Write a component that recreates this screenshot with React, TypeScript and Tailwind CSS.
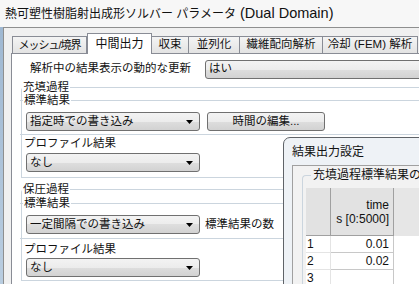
import React from 'react';

const font = "font-['Liberation_Sans','Noto_Sans_CJK_JP',sans-serif]";

function Arrow() {
  return (
    <svg width="7" height="4" viewBox="0 0 7 4">
      <path d="M0 0h7L3.5 4z" fill="#000" />
    </svg>
  );
}

function Combo({ value, w, arrow = true }: { value: string; w: string; arrow?: boolean }) {
  return (
    <div
      className={`${w} h-[19px] shrink-0 flex items-center justify-between rounded-[3px] border border-[#707070] bg-[linear-gradient(#f3f3f3,#ececec_50%,#dedede_50%,#d2d2d2)] pl-[3px] pr-[6px] text-[11.5px] leading-none`}
    >
      <span>{value}</span>
      {arrow && <Arrow />}
    </div>
  );
}

function Tab({ label, w, active, extra = '' }: { label: string; w: string; active?: boolean; extra?: string }) {
  if (active) {
    return (
      <div
        className={`${w} h-[21px] -mb-px relative z-10 flex items-center justify-center border border-b-0 border-[#898c95] bg-white text-[12px] leading-none`}
      >
        {label}
      </div>
    );
  }
  return (
    <div
      className={`${w} ${extra} h-[17px] -ml-px flex items-center justify-center border border-b-0 border-[#898c95] bg-[linear-gradient(#f4f4f4,#e3e3e3)] text-[11.5px] leading-none`}
    >
      {label}
    </div>
  );
}

export default function App() {
  return (
    <div className={`w-[419px] h-[284px] overflow-hidden relative bg-[#f0f0f0] text-[#111] ${font}`}>
      {/* title bar */}
      <div className="h-[27px] bg-[#f7f7f7] pl-[5px] flex items-center text-[12px] leading-none whitespace-nowrap">
        熱可塑性樹脂射出成形ソルバー パラメータ <span className="ml-[4px] text-[14.5px]">(Dual Domain)</span>
      </div>

      <div className="flex h-[257px]">
        <div className="w-[3px] bg-[linear-gradient(#9fb8d2,#b9cde0)]" />
        <div className="flex-1 border-l border-t border-[#8e8f8f] bg-[#f0f0f0] pl-[7px] pt-[5px] overflow-hidden">
          {/* tabs */}
          <div className="flex items-end h-[20px] pl-[2px] whitespace-nowrap">
            <Tab label="メッシュ/境界" w="w-[75px]" extra="text-[11px] tracking-[-1px]" />
            <Tab label="中間出力" w="w-[65px]" active />
            <Tab label="収束" w="w-[38px]" />
            <Tab label="並列化" w="w-[52px]" />
            <Tab label="繊維配向解析" w="w-[84px]" />
            <Tab label="冷却 (FEM) 解析" w="w-[96px]" />
          </div>

          {/* tab panel */}
          <div className="w-[500px] h-[240px] border border-[#898c95] bg-white">
            <div className="mt-[5px] pl-[18px] flex items-center h-[20px] whitespace-nowrap">
              <div className="w-[175px] text-[11.5px] leading-none">解析中の結果表示の動的な更新</div>
              <Combo value="はい" w="w-[260px]" arrow={false} />
            </div>

            {/* 充填過程 */}
            <fieldset className="mt-[2px] ml-[9px] w-[470px] border-l border-t border-b border-[#cbd5de] rounded-tl-[4px]">
              <legend className="px-[1px] text-[11.5px] leading-[12px]">充填過程</legend>
              <fieldset className="mt-[1px] -ml-[2px] border-t border-b border-[#cbd5de] pb-[3px]">
                <legend className="ml-[3px] px-[1px] text-[11.5px] leading-[12px]">標準結果</legend>
                <div className="mt-[6px] ml-[6px] flex gap-[7px]">
                  <Combo value="指定時での書き込み" w="w-[174px]" />
                  <div className="w-[118px] h-[19px] flex items-center justify-center rounded-[3px] border border-[#707070] bg-[linear-gradient(#f3f3f3,#ececec_50%,#dedede_50%,#d2d2d2)] text-[11.5px] leading-none">
                    時間の編集...
                  </div>
                </div>
              </fieldset>
              <fieldset className="mt-[2px] -ml-[2px] pb-[5px]">
                <legend className="ml-[3px] px-[1px] text-[11.5px] leading-[12px]">プロファイル結果</legend>
                <div className="mt-[4px] ml-[6px] flex">
                  <Combo value="なし" w="w-[174px]" />
                </div>
              </fieldset>
            </fieldset>

            {/* 保圧過程 */}
            <fieldset className="mt-[5px] ml-[9px] w-[470px] border-l border-t border-b border-[#cbd5de] rounded-tl-[4px]">
              <legend className="px-[1px] text-[11.5px] leading-[12px]">保圧過程</legend>
              <fieldset className="mt-[2px] -ml-[2px] border-t border-b border-[#cbd5de] pb-[4px]">
                <legend className="ml-[3px] px-[1px] text-[11.5px] leading-[12px]">標準結果</legend>
                <div className="mt-[6px] ml-[6px] flex items-center gap-[5px] whitespace-nowrap">
                  <Combo value="一定間隔での書き込み" w="w-[174px]" />
                  <span className="text-[11.5px] leading-none">標準結果の数</span>
                </div>
              </fieldset>
              <fieldset className="mt-[4px] -ml-[2px] pb-[3px]">
                <legend className="ml-[3px] px-[1px] text-[11.5px] leading-[12px]">プロファイル結果</legend>
                <div className="mt-[3px] ml-[6px] flex">
                  <Combo value="なし" w="w-[174px]" />
                </div>
              </fieldset>
            </fieldset>
          </div>
        </div>
      </div>

      {/* overlapping dialog */}
      <div className="absolute left-[283px] top-[137px] w-[200px] h-[160px] rounded-tl-[7px] border border-[#5f6368] bg-[#eef2f6] pl-[8px]">
        <div className="h-[27px] flex items-center text-[12px] leading-none">結果出力設定</div>
        <div className="h-[130px] border-l border-t border-[#a0a0a0] bg-[#f2f2f2] pl-[9px] pt-[3px]">
          <fieldset className="w-[180px] border-l border-t border-[#cbd5de] rounded-tl-[4px] pl-[3px]">
            <legend className="ml-[5px] px-[2px] text-[12px] leading-[12px] whitespace-nowrap">充填過程標準結果の表示</legend>
            <div className="mt-[7px] flex flex-col text-[12px] font-['Liberation_Sans',sans-serif] leading-none">
              <div className="flex h-[48px] bg-[#e6e6e6]">
                <div className="w-[25px] border-r border-b border-[#a0a0a0] bg-[#e2e2e2]" />
                <div className="w-[63px] border-r border-b border-[#a0a0a0] bg-[#e2e2e2] flex flex-col items-end justify-center pr-[4px] gap-[2px]">
                  <span>time</span>
                  <span>s [0:5000]</span>
                </div>
              </div>
              {['0.01', '0.02', ''].map((v, i) => (
                <div key={i} className="flex h-[17px] bg-white">
                  <div className="w-[25px] border-r border-b border-[#e4e4e4] flex items-center pl-[1px]">{i + 1}</div>
                  <div className="w-[63px] border-r border-b border-[#c8c8c8] flex items-center justify-end pr-[4px]">{v}</div>
                </div>
              ))}
            </div>
          </fieldset>
        </div>
      </div>
    </div>
  );
}
